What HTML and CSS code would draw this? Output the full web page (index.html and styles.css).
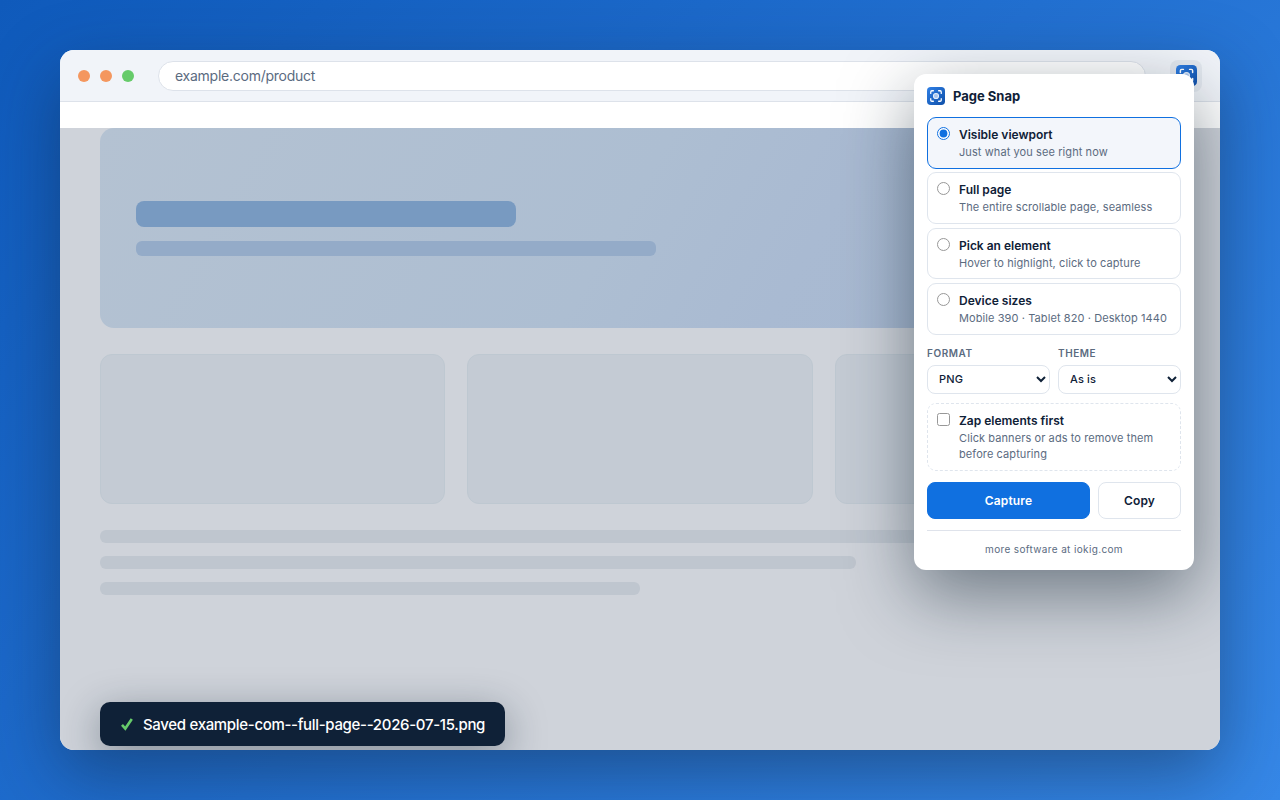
FILE: index.html
```html
<!DOCTYPE html>
<html lang="en">
<head>
    <meta charset="UTF-8">
    <meta name="viewport" content="width=device-width, initial-scale=1.0">
    <title>Page Snap</title>
    <link rel="stylesheet" href="styles.css">
</head>
<body>
    <!-- shared logo -->
    <svg class="defs" width="0" height="0">
        <defs>
            <linearGradient id="logoFill" x1="0" y1="0" x2="1" y2="1">
                <stop offset="0" stop-color="#2f80e6"/>
                <stop offset="1" stop-color="#0f4fa8"/>
            </linearGradient>
            <symbol id="logo" viewBox="0 0 24 24">
                <rect width="24" height="24" rx="5" fill="url(#logoFill)"/>
                <path d="M5 8.500V6.500Q5 5 6.500 5H8.500M15.500 5H17.500Q19 5 19 6.500V8.500M19 15.500V17.500Q19 19 17.500 19H15.500M8.500 19H6.500Q5 19 5 17.500V15.500" fill="none" stroke="#fff" stroke-width="1.7" stroke-linecap="round"/>
                <circle cx="12" cy="12" r="3.4" fill="#a9c6ee" stroke="#e3eefb" stroke-width="1.4"/>
            </symbol>
        </defs>
    </svg>

    <div class="window">
        <div class="toolbar">
            <div class="dots">
                <span class="dot"></span>
                <span class="dot"></span>
                <span class="dot dot-green"></span>
            </div>
            <div class="address">example.com/product</div>
            <div class="extension"><svg class="extension-icon"><use href="#logo"/></svg></div>
        </div>

        <div class="page">
            <div class="hero">
                <div class="hero-title"></div>
                <div class="hero-text"></div>
            </div>
            <div class="cards">
                <div class="card"></div>
                <div class="card"></div>
                <div class="card"></div>
            </div>
            <div class="lines">
                <div class="line"></div>
                <div class="line line-medium"></div>
                <div class="line line-short"></div>
            </div>
        </div>

        <div class="popup">
            <div class="popup-header">
                <svg class="popup-logo"><use href="#logo"/></svg>
                <span>Page Snap</span>
            </div>

            <div class="modes">
                <label class="option selected">
                    <input type="radio" name="mode" checked>
                    <span class="option-body">
                        <span class="option-title">Visible viewport</span>
                        <span class="option-text">Just what you see right now</span>
                    </span>
                </label>
                <label class="option">
                    <input type="radio" name="mode">
                    <span class="option-body">
                        <span class="option-title">Full page</span>
                        <span class="option-text">The entire scrollable page, seamless</span>
                    </span>
                </label>
                <label class="option">
                    <input type="radio" name="mode">
                    <span class="option-body">
                        <span class="option-title">Pick an element</span>
                        <span class="option-text">Hover to highlight, click to capture</span>
                    </span>
                </label>
                <label class="option">
                    <input type="radio" name="mode">
                    <span class="option-body">
                        <span class="option-title">Device sizes</span>
                        <span class="option-text">Mobile 390 · Tablet 820 · Desktop 1440</span>
                    </span>
                </label>
            </div>

            <div class="fields">
                <label class="field">
                    <span class="field-label">Format</span>
                    <select><option>PNG</option></select>
                </label>
                <label class="field">
                    <span class="field-label">Theme</span>
                    <select><option>As is</option></select>
                </label>
            </div>

            <label class="option zap">
                <input type="checkbox">
                <span class="option-body">
                    <span class="option-title">Zap elements first</span>
                    <span class="option-text">Click banners or ads to remove them before capturing</span>
                </span>
            </label>

            <div class="actions">
                <button class="button button-primary">Capture</button>
                <button class="button">Copy</button>
            </div>

            <div class="popup-footer">more software at iokig.com</div>
        </div>

        <div class="toast">
            <svg class="check" viewBox="0 0 14 14"><path d="M2 7.800L5.300 11.600L11.800 2"/></svg>
            <span>Saved example-com--full-page--2026-07-15.png</span>
        </div>
    </div>
</body>
</html>
```
FILE: styles.css
```css
* {
    box-sizing: border-box;
}

body {
    margin: 0;
    height: 800px;
    padding: 50px 60px;
    overflow: hidden;
    background: linear-gradient(135deg, #0f5abb 0%, #2270d1 50%, #3688e8 100%);
    font-family: Inter, "Liberation Sans", sans-serif;
    color: #0f2137;
}

.defs {
    position: absolute;
}

.window {
    position: relative;
    display: flex;
    flex-direction: column;
    height: 700px;
    border-radius: 14px;
    overflow: hidden;
    background: #fff;
    box-shadow: 0 24px 70px rgba(15, 33, 55, 0.45);
}

.toolbar {
    display: flex;
    align-items: center;
    height: 52px;
    padding: 0 18px;
    background: #f1f4f9;
    border-bottom: 1px solid #dde2ea;
}

.dots {
    display: flex;
    gap: 10px;
    margin-right: 24px;
}

.dot {
    width: 12px;
    height: 12px;
    border-radius: 50%;
    background: #f4975f;
}

.dot-green {
    background: #66cb6a;
}

.address {
    flex: 1;
    height: 30px;
    padding: 0 16px;
    border: 1px solid #dde2ea;
    border-radius: 15px;
    background: #fff;
    font-size: 14px;
    line-height: 28px;
    letter-spacing: -0.25px;
    color: #5b6b7f;
}

.extension {
    display: flex;
    align-items: center;
    justify-content: center;
    width: 32px;
    height: 32px;
    margin-left: 24px;
    border-radius: 8px;
    background: #e3e8ef;
}

.extension-icon {
    width: 21px;
    height: 21px;
}

.page {
    flex: 1;
    margin-top: 26px;
    padding: 0 40px;
    background: #cfd3da;
}

.hero {
    display: flex;
    flex-direction: column;
    justify-content: center;
    gap: 14px;
    height: 200px;
    padding: 0 36px;
    border-radius: 14px;
    background: linear-gradient(120deg, #b4c2d2, #adbed2 48%, #a9bad2 65%, #a5b7d0);
}

.hero-title {
    width: 380px;
    height: 26px;
    border-radius: 8px;
    background: #789ac1;
}

.hero-text {
    width: 520px;
    height: 15px;
    border-radius: 6px;
    background: #94abc8;
}

.cards {
    display: flex;
    gap: 22px;
    margin-top: 26px;
}

.card {
    flex: 1;
    height: 150px;
    border: 1px solid #bec8d1;
    border-radius: 12px;
    background: #c4cbd4;
}

.lines {
    display: flex;
    flex-direction: column;
    gap: 13px;
    margin-top: 26px;
}

.line {
    height: 13px;
    border-radius: 6px;
    background: #bfc6cf;
}

.line-medium {
    width: 70%;
}

.line-short {
    width: 50%;
}

/* extension popup */
.popup {
    position: absolute;
    top: 24px;
    right: 26px;
    width: 280px;
    height: 496px;
    padding: 13px;
    border-radius: 12px;
    background: #fff;
    box-shadow: 0 24px 70px rgba(15, 33, 48, 0.5);
}

.popup-header {
    display: flex;
    align-items: center;
    gap: 8px;
    height: 18px;
    margin-bottom: 12px;
    font-size: 13px;
    font-weight: 700;
}

.popup-logo {
    width: 18px;
    height: 18px;
}

.modes {
    display: flex;
    flex-direction: column;
    gap: 3.5px;
}

.option {
    display: flex;
    gap: 9px;
    height: 51.8px;
    padding: 8px 9px;
    border: 1px solid #dfe5ed;
    border-radius: 9px;
}

.option.selected {
    border-color: #1070e0;
    background: #f3f6fb;
}

.option input {
    flex: none;
    width: 13px;
    height: 13px;
    margin: 1px 0 0;
    accent-color: #1070e0;
    opacity: 0.75;
}

.option.selected input {
    opacity: 1;
}

.option-body {
    display: flex;
    flex-direction: column;
    gap: 1px;
}

.option-title {
    font-size: 12px;
    font-weight: 600;
    line-height: 17px;
}

.option-text {
    font-size: 11px;
    line-height: 16px;
    letter-spacing: 0.09px;
    color: #5b6b7f;
}

.fields {
    display: flex;
    gap: 8px;
    margin-top: 11px;
}

.field {
    display: flex;
    flex: 1;
    flex-direction: column;
    gap: 5px;
}

.field-label {
    font-size: 10px;
    font-weight: 600;
    line-height: 14px;
    letter-spacing: 0.55px;
    text-transform: uppercase;
    color: #5b6b7f;
}

select {
    width: 100%;
    height: 29px;
    padding: 0 0 1px 7px;
    border: 1px solid #dfe5ed;
    border-radius: 8px;
    background: #fff;
    font: 500 11px Inter, sans-serif;
    letter-spacing: 0.15px;
    color: #0f2137;
}

.zap {
    height: 68px;
    margin-top: 9px;
    border-style: dashed;
}

.actions {
    display: flex;
    gap: 8px;
    margin-top: 11px;
}

.button {
    width: 83px;
    height: 37px;
    border: 1px solid #dfe5ed;
    border-radius: 8px;
    background: #fff;
    font: 600 12px Inter, sans-serif;
    letter-spacing: 0.15px;
    color: #0f2137;
}

.button-primary {
    flex: 1;
    border-color: #1070e0;
    background: #1070e0;
    color: #fff;
}

.popup-footer {
    margin-top: 11px;
    padding-top: 10px;
    border-top: 1px solid #dfe3eb;
    font-size: 10px;
    line-height: 16px;
    letter-spacing: 0.36px;
    text-align: center;
    color: #5b6b7f;
}

.toast {
    position: absolute;
    left: 40px;
    bottom: 4px;
    display: flex;
    align-items: center;
    gap: 9px;
    height: 44px;
    padding: 0 20px;
    border-radius: 10px;
    background: #0f2137;
    box-shadow: 0 10px 40px rgba(15, 33, 48, 0.4);
    font-size: 15px;
    font-weight: 500;
    letter-spacing: -0.32px;
    color: #fff;
}

.check {
    width: 14px;
    height: 14px;
    fill: none;
    stroke: #66cb6a;
    stroke-width: 2.6;
}
```
